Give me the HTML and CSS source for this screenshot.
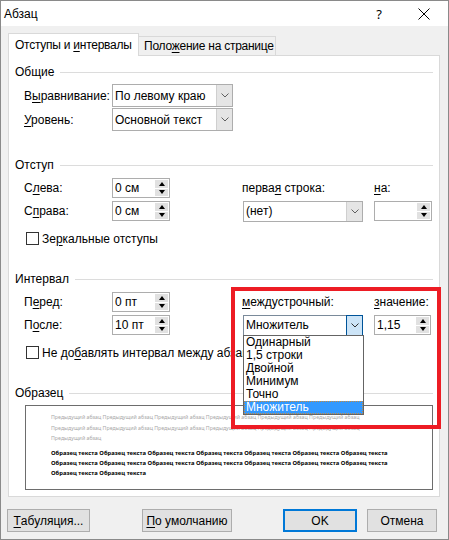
FILE: index.html
```html
<!DOCTYPE html>
<html lang="ru">
  <head>
    <meta charset="UTF-8" />
    <title>Абзац</title>
    <link rel="stylesheet" href="styles.css">
  </head>
  <body>
    <div class="dialog">
      <div class="titlebar">
        <span class="title">Абзац</span>
        <span class="help">?</span>
        <svg class="close" width="12" height="12" viewBox="0 0 12 12">
          <path d="M0.5 0.5L11.5 11.5M11.5 0.5L0.5 11.5" stroke="#000" stroke-width="1" fill="none" />
        </svg>
      </div>

      <div class="tabs">
        <div class="tab active">Отступы и <u>и</u>нтервалы</div>
        <div class="tab second">Поло<u>ж</u>ение на странице</div>
      </div>

      <div class="panel">
        <div class="group-title first">Общие</div>
        <div class="grid general">
          <span class="lbl">В<u>ы</u>равнивание:</span>
          <div class="select tall">
            <span class="sel-text">По левому краю</span>
            <span class="sel-btn"><svg width="8" height="5" viewBox="0 0 8 5"><path d="M0.5 0.5L4 4L7.5 0.5" stroke="#606060" fill="none" /></svg></span>
          </div>
          <span class="lbl"><u>У</u>ровень:</span>
          <div class="select tall">
            <span class="sel-text">Основной текст</span>
            <span class="sel-btn"><svg width="8" height="5" viewBox="0 0 8 5"><path d="M0.5 0.5L4 4L7.5 0.5" stroke="#606060" fill="none" /></svg></span>
          </div>
        </div>

        <div class="group-title">Отступ</div>
        <div class="grid wide">
          <span class="lbl">С<u>л</u>ева:</span>
          <div class="spin"><span class="val">0 см</span><span class="arrows"><i class="up"></i><i class="down"></i></span></div>
          <span></span>
          <span class="lbl">перва<u>я</u> строка:</span>
          <span class="lbl"><u>н</u>а:</span>

          <span class="lbl">С<u>п</u>рава:</span>
          <div class="spin"><span class="val">0 см</span><span class="arrows"><i class="up"></i><i class="down"></i></span></div>
          <span></span>
          <div class="select">
            <span class="sel-text">(нет)</span>
            <span class="sel-btn"><svg width="8" height="5" viewBox="0 0 8 5"><path d="M0.5 0.5L4 4L7.5 0.5" stroke="#606060" fill="none" /></svg></span>
          </div>
          <div class="spin"><span class="val"></span><span class="arrows"><i class="up"></i><i class="down"></i></span></div>
        </div>
        <div class="check-row"><span class="box"></span>Зе<u>р</u>кальные отступы</div>

        <div class="group-title">Интервал</div>
        <div class="grid wide">
          <span class="lbl">П<u>е</u>ред:</span>
          <div class="spin"><span class="val">0 пт</span><span class="arrows"><i class="up"></i><i class="down"></i></span></div>
          <span></span>
          <span class="lbl"><u>м</u>еждустрочный:</span>
          <span class="lbl"><u>з</u>начение:</span>

          <span class="lbl">П<u>о</u>сле:</span>
          <div class="spin"><span class="val">10 пт</span><span class="arrows"><i class="up"></i><i class="down"></i></span></div>
          <span></span>
          <div class="select open">
            <span class="sel-text">Множитель</span>
            <span class="sel-btn"><svg width="8" height="5" viewBox="0 0 8 5"><path d="M0.5 0.5L4 4L7.5 0.5" stroke="#303030" fill="none" /></svg></span>
            <ul class="dropdown">
              <li>Одинарный</li>
              <li>1,5 строки</li>
              <li>Двойной</li>
              <li>Минимум</li>
              <li>Точно</li>
              <li class="selected">Множитель</li>
            </ul>
          </div>
          <div class="spin short"><span class="val">1,15</span><span class="arrows"><i class="up"></i><i class="down"></i></span></div>
        </div>
        <div class="check-row"><span class="box"></span><span class="clip">Не до<u>б</u>авлять интервал между абзацами одного стиля</span></div>

        <div class="group-title">Образец</div>
        <div class="sample">
          <div class="prev">Предыдущий абзац Предыдущий абзац Предыдущий абзац Предыдущий абзац Предыдущий абзац Предыдущий абзац</div>
          <div class="prev">Предыдущий абзац Предыдущий абзац Предыдущий абзац Предыдущий абзац Предыдущий абзац Предыдущий абзац</div>
          <div class="prev">Предыдущий абзац</div>
          <div class="cur first-cur">Образец текста Образец текста Образец текста Образец текста Образец текста Образец текста Образец текста</div>
          <div class="cur">Образец текста Образец текста Образец текста Образец текста Образец текста Образец текста Образец текста</div>
          <div class="cur">Образец текста Образец текста</div>
        </div>
      </div>

      <div class="buttons">
        <div class="btn tabs-btn"><u>Т</u>абуляция...</div>
        <div class="btn default-btn"><u>П</u>о умолчанию</div>
        <div class="btn ok-btn">OK</div>
        <div class="btn cancel-btn">Отмена</div>
      </div>

      <!-- выделение блока междустрочного интервала -->
      <div class="highlight"></div>
    </div>
  </body>
</html>
```

FILE: styles.css
```css
html,
body {
  margin: 0;
  padding: 0;
  background: #fff;
}

body {
  font-family: "Liberation Sans", Arial, sans-serif;
  font-size: 12px;
  color: #000;
}

u {
  text-decoration-thickness: 1px;
  text-underline-offset: 2px;
}

.dialog {
  position: relative;
  width: 449px;
  height: 540px;
  box-sizing: border-box;
  border: 1px solid #8a8a8a;
  background: #f0f0f0;
  display: flex;
  flex-direction: column;
  overflow: hidden;
}

/* заголовок окна */
.titlebar {
  height: 25px;
  flex: none;
  background: #fff;
  display: flex;
  align-items: center;
  padding-left: 3px;
}

.title {
  flex: 1;
}

.help {
  font-family: "Noto Sans", sans-serif;
  font-size: 13px;
  margin-right: 36px;
}

.close {
  margin-right: 18px;
}

/* вкладки */
.tabs {
  display: flex;
  align-items: flex-end;
  height: 22px;
  margin-top: 7px;
  padding-left: 7px;
  flex: none;
}

.tab {
  box-sizing: border-box;
  height: 19px;
  line-height: 18px;
  border: 1px solid #d9d9d9;
  border-bottom: none;
  background: #f0f0f0;
  padding-left: 5px;
  white-space: nowrap;
  letter-spacing: -0.25px;
}

.tab.active {
  width: 131px;
  height: 23px;
  line-height: 22px;
  margin-bottom: -1px;
  padding-left: 6px;
  background: #fff;
  position: relative;
  z-index: 1;
}

.tab.second {
  width: 137px;
  border-left: none;
}

.panel {
  box-sizing: border-box;
  height: 442px;
  margin: 0 8px 0 7px;
  padding: 0 6px;
  border: 1px solid #d9d9d9;
  background: #fff;
  flex: none;
}

.group-title {
  display: flex;
  align-items: center;
  height: 16px;
  line-height: 16px;
  margin-top: 26px;
}

.group-title::after {
  content: "";
  flex: 1;
  height: 1px;
  background: #dcdcdc;
  margin-left: 6px;
}

.group-title.first {
  margin-top: 8px;
}

.grid {
  display: grid;
  padding-left: 9px;
  margin-top: 5px;
  align-items: center;
}

.grid.general {
  grid-template-columns: 88px 121px;
  grid-auto-rows: 23px;
  row-gap: 1px;
  margin-top: 4px;
}

.grid.wide {
  grid-template-columns: 88px 58px 72px 132px 58px;
  grid-auto-rows: 20px;
  row-gap: 3px;
}

.lbl {
  white-space: nowrap;
}

/* выпадающие списки */
.select {
  position: relative;
  box-sizing: border-box;
  width: 120px;
  height: 21px;
  margin-left: 1px;
  border: 1px solid #adadad;
  background: #fff;
  display: flex;
}

.select.tall {
  width: 121px;
  height: 23px;
  margin-left: 0;
}

.sel-text {
  flex: 1;
  padding-left: 2px;
  display: flex;
  align-items: center;
  white-space: nowrap;
}

.sel-btn {
  width: 15px;
  background: #e5e5e5;
  border-left: 1px solid #cfcfcf;
  display: flex;
  align-items: center;
  justify-content: center;
}

.select.open {
  border-color: #7a8a9a;
}

.select.open .sel-btn {
  background: #cce4f7;
  border: 1px solid #005499;
  margin: -1px -1px -1px 0;
}

.dropdown {
  position: absolute;
  top: 100%;
  left: -1px;
  width: 121px;
  box-sizing: border-box;
  margin: 0;
  padding: 0;
  list-style: none;
  border: 1px solid #646464;
  background: #fff;
  z-index: 5;
}

.dropdown li {
  height: 13px;
  line-height: 13px;
  padding-left: 2px;
  white-space: nowrap;
}

.dropdown li.selected {
  background: #3399ff;
  color: #fff;
  outline: 1px dotted #c88a3c;
  outline-offset: -1px;
}

/* поля со счётчиком */
.spin {
  box-sizing: border-box;
  width: 58px;
  height: 20px;
  border: 1px solid #adadad;
  background: #fff;
  display: flex;
}

.spin.short {
  width: 57px;
}

.val {
  flex: 1;
  padding-left: 2px;
  line-height: 18px;
  white-space: nowrap;
}

.arrows {
  width: 13px;
  margin: 1px 1px 1px 0;
  display: flex;
  flex-direction: column;
  gap: 1px;
}

.arrows i {
  flex: 1;
  background: #e1e1e1;
  display: flex;
  align-items: center;
  justify-content: center;
}

.arrows i::before {
  content: "";
  border-left: 3px solid transparent;
  border-right: 3px solid transparent;
}

.arrows .up::before {
  border-bottom: 4px solid #000;
}

.arrows .down::before {
  border-top: 4px solid #000;
}

/* флажки */
.check-row {
  display: flex;
  align-items: center;
  height: 13px;
  padding-left: 11px;
  margin-top: 11px;
  white-space: nowrap;
}

.check-row .box {
  width: 13px;
  height: 13px;
  box-sizing: border-box;
  border: 1px solid #333;
  background: #fff;
  margin-right: 3px;
  flex: none;
}

/* подпись уходит под открытый список */
.check-row .clip {
  width: 202px;
  overflow: hidden;
}

/* образец */
.sample {
  box-sizing: border-box;
  height: 85px;
  margin: 4px 0 0 10px;
  padding: 6px 0 0 25px;
  border: 1px solid #6d6d6d;
  background: #fff;
  overflow: hidden;
}

.sample div {
  font-family: "Noto Sans", sans-serif;
  font-size: 5.25px;
  line-height: 10.5px;
  height: 10.5px;
  white-space: nowrap;
}

.sample .prev {
  color: #a8a8a8;
}

.sample .cur {
  font-weight: bold;
  font-size: 5.9px;
  line-height: 10px;
  height: 10px;
}

.sample .first-cur {
  margin-top: 4px;
}

/* кнопки */
.buttons {
  display: flex;
  margin-top: 12px;
  padding-left: 6px;
  flex: none;
}

.btn {
  box-sizing: border-box;
  height: 23px;
  border: 1px solid #adadad;
  background: #e1e1e1;
  display: flex;
  align-items: center;
  justify-content: center;
  white-space: nowrap;
}

.tabs-btn {
  width: 83px;
}

.default-btn {
  width: 90px;
  margin-left: 52px;
}

.ok-btn {
  width: 74px;
  margin-left: 51px;
  border: 2px solid #0078d7;
}

.cancel-btn {
  width: 70px;
  margin-left: 10px;
}

.highlight {
  position: absolute;
  left: 230px;
  top: 286px;
  width: 210px;
  height: 142px;
  box-sizing: border-box;
  border: 4px solid #ed1c24;
  z-index: 10;
}
```
